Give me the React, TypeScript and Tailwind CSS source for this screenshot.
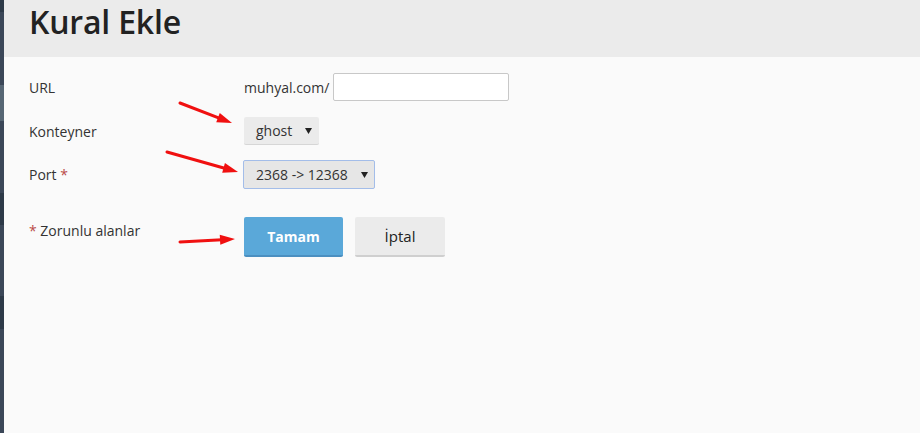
import React from "react";

function Caret() {
  return (
    <svg width="7" height="7" viewBox="0 0 7 7" className="block">
      <polygon points="0,1 7,1 3.5,7" fill="#222" />
    </svg>
  );
}

function Arrows() {
  const arrows = [
    { x1: 180, y1: 103, x2: 232, y2: 123 },
    { x1: 167, y1: 152, x2: 238, y2: 172 },
    { x1: 180, y1: 242, x2: 235, y2: 239 },
  ];
  return (
    <svg className="absolute left-0 top-0 pointer-events-none" width="920" height="433">
      {arrows.map((a, i) => {
        const dx = a.x2 - a.x1;
        const dy = a.y2 - a.y1;
        const len = Math.sqrt(dx * dx + dy * dy);
        const ux = dx / len;
        const uy = dy / len;
        const hl = 15;
        const hw = 5;
        const bx = a.x2 - ux * hl;
        const by = a.y2 - uy * hl;
        const p1 = `${bx - uy * hw},${by + ux * hw}`;
        const p2 = `${bx + uy * hw},${by - ux * hw}`;
        return (
          <g key={i}>
            <line x1={a.x1} y1={a.y1} x2={bx + ux * 2} y2={by + uy * 2} stroke="#f01010" strokeWidth="3" strokeLinecap="round" />
            <polygon points={`${a.x2},${a.y2} ${p1} ${p2}`} fill="#f01010" />
          </g>
        );
      })}
    </svg>
  );
}

export default function App() {
  return (
    <div
      className="relative flex w-[920px] h-[433px] overflow-hidden bg-[#fafafa] text-[#333]"
      style={{ fontFamily: '"Open Sans", "Noto Sans", sans-serif' }}
    >
      <div className="flex flex-col w-[4px] shrink-0">
        <div className="h-[12px] bg-[#2d3a48]" />
        <div className="h-[73px] bg-[#3b4758]" />
        <div className="h-[36px] bg-[#566674]" />
        <div className="h-[72px] bg-[#3b4758]" />
        <div className="h-[32px] bg-[#2d3a48]" />
        <div className="h-[71px] bg-[#3b4758]" />
        <div className="h-[33px] bg-[#2d3a48]" />
        <div className="flex-1 bg-[#3b4758]" />
      </div>
      <div className="flex-1 flex flex-col">
        <div className="h-[57px] bg-[#ebebeb] pl-[25px] flex items-start">
          <h1 className="text-[32px] leading-[44px] font-semibold text-[#222] tracking-[-0.2px]">Kural Ekle</h1>
        </div>
        <div className="pl-[25px] pt-[16px] flex flex-col text-[14px]">
          <div className="flex items-center h-[28px]">
            <div className="w-[215px]">URL</div>
            <span>muhyal.com/</span>
            <input
              type="text"
              className="ml-[4px] w-[176px] h-[28px] bg-white border border-[#c8c8c8] rounded-[2px] outline-none"
            />
          </div>
          <div className="flex items-center h-[28px] mt-[16px]">
            <div className="w-[215px]">Konteyner</div>
            <div className="flex items-center h-[28px] w-[75px] bg-[#ebebeb] border-b border-[#d6d6d6] rounded-[2px] pl-[12px] pr-[4px] justify-between">
              <span className="text-[#333]">ghost</span>
              <span className="mr-[3px]"><Caret /></span>
            </div>
          </div>
          <div className="flex items-center h-[29px] mt-[15px]">
            <div className="w-[214px]">
              Port <span className="text-[#b94a48]">*</span>
            </div>
            <div className="flex items-center h-[29px] w-[132px] bg-[#e6e6e6] border border-[#a3bde9] rounded-[2px] pl-[12px] pr-[5px] justify-between">
              <span className="text-[#333]">2368 -&gt; 12368</span>
              <span className="mr-[1px]"><Caret /></span>
            </div>
          </div>
          <div className="flex items-start mt-[28px]">
            <div className="w-[215px] pt-[3px]">
              <span className="text-[#b94a48]">*</span> Zorunlu alanlar
            </div>
            <button className="w-[99px] h-[40px] bg-[#5aa8d9] border-b-2 border-[#4b8fc0] rounded-[2px] text-white font-bold text-[14px]">
              Tamam
            </button>
            <button className="ml-[12px] w-[90px] h-[40px] bg-[#ebebeb] border-b-2 border-[#cfcfcf] rounded-[2px] text-[#222] font-normal text-[15px]">
              İptal
            </button>
          </div>
        </div>
      </div>
      <Arrows />
    </div>
  );
}
